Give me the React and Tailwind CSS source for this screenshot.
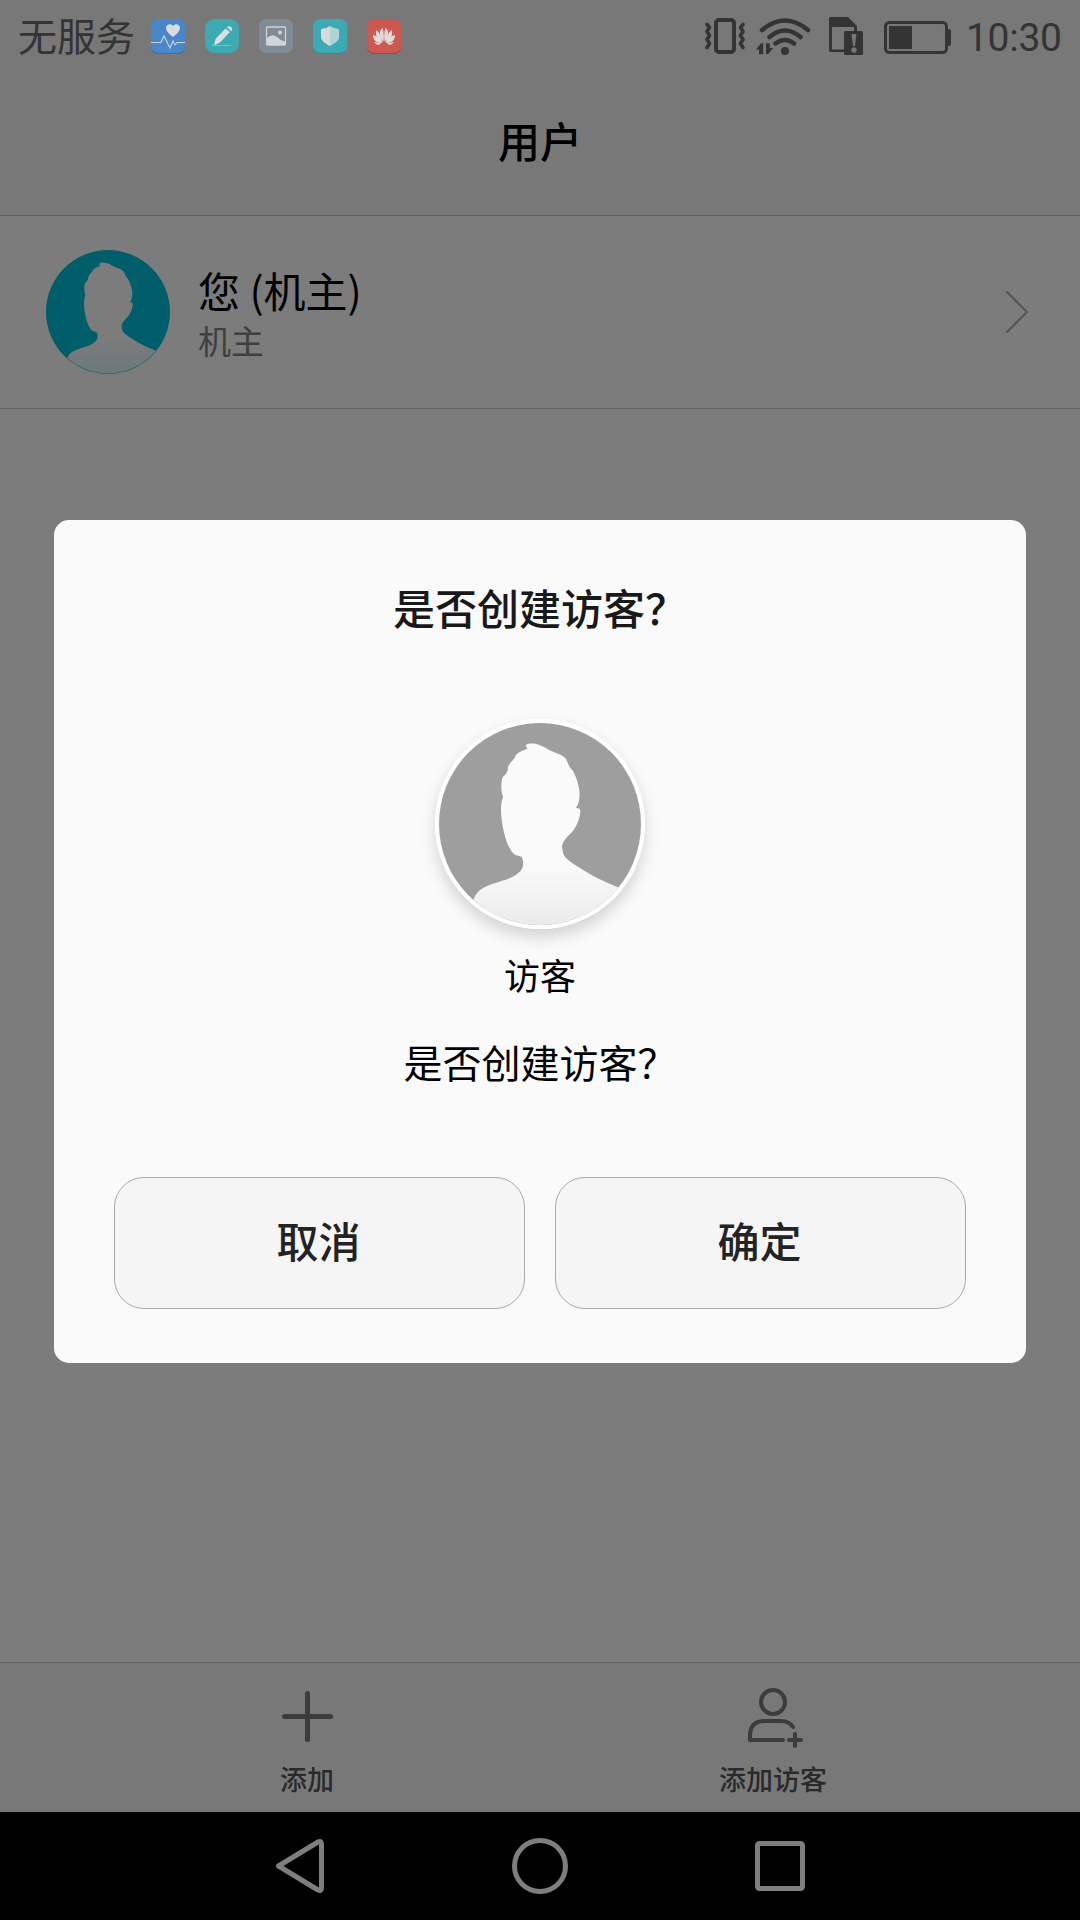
const AVATAR_PATH =
  'M58 197 C60 186 62 179 68 174 C80 166 92 166 102 160 C109 156 112 152 111 145 C110 138 106 141 102 138 C95 132 90 113 89 96 C89 91 89 86 91 81 C89 75 89 70 90 63 C91 59 96 59 96 51 C98 46 101 45 103 41 C104 37 110 35 115 33 C116 32 113 31 114 29 C119 26 127 28 134 32 C140 37 150 37 154 43 C156 47 157 51 161 55 C166 64 169 77 167 84 C167 87 165 90 164 92 C168 92 169 94 168 98 C167 105 163 114 158 118 C154 122 151 125 150 130 C151 137 151 139 155 143 C170 155 190 165 208 172 L208 215 L58 215 Z';

function Avatar({ id, size, fill, body, fade, ring }) {
  return (
    <svg width={size} height={size} viewBox="27 7 202 202">
      <defs>
        <clipPath id={`${id}-clip`}>
          <circle cx="128" cy="108" r={ring ? 101 : 100} />
        </clipPath>
        <linearGradient id={`${id}-body`} gradientUnits="userSpaceOnUse" x1="0" y1="148" x2="0" y2="209">
          <stop offset="0" stopColor={body} />
          <stop offset="1" stopColor={fade} />
        </linearGradient>
      </defs>
      <circle cx="128" cy="108" r="101" fill={fill} />
      <path d={AVATAR_PATH} fill={`url(#${id}-body)`} clipPath={`url(#${id}-clip)`} />
    </svg>
  );
}

function NotificationIcons() {
  return (
    <div className="flex gap-5">
      <svg width="34" height="35" viewBox="0 0 34 35">
        <rect y="1" width="34" height="34" rx="7" fill="#3c6da8" />
        <rect width="34" height="34" rx="7" fill="#4a86ca" />
        <path d="M22 18 C18 15 15 12 15 9 C15 5 20 4 22 7 C24 4 29 5 29 9 C29 12 26 15 22 18Z" fill="#d9dce0" />
        <path d="M0 23.5 H10 L13 17 L19 29 L22 22 L24 26 L26 23.5 H34" fill="none" stroke="#c3d3e6" strokeWidth="1.2" />
      </svg>
      <svg width="34" height="35" viewBox="0 0 34 35">
        <rect width="34" height="34" rx="9" fill="#3caab0" />
        <path d="M9 26.500 L10.500 20 L20.500 9.500 L25 13 L15 23.500Z" fill="#dcdfdf" />
        <path d="M22 8.500 C24 5.500 28 8.500 27 11.500 L26 12Z" fill="#dcdfdf" />
        <path d="M7 26.500 H26" stroke="#8ac5c8" strokeWidth="0.8" />
      </svg>
      <svg width="34" height="35" viewBox="0 0 34 35">
        <rect width="34" height="34" rx="7" fill="#7f8b95" />
        <rect x="7.500" y="8" width="19" height="18" rx="1" fill="none" stroke="#ced2d5" strokeWidth="1.300" />
        <path d="M8 19 Q13 14 18 18 Q22 22 26 22.500 V26 H8Z" fill="#d2d5d7" />
        <circle cx="21" cy="13.500" r="2" fill="#d2d5d7" />
      </svg>
      <svg width="34" height="35" viewBox="0 0 34 35">
        <rect y="1" width="34" height="34" rx="7" fill="#338990" />
        <rect width="34" height="34" rx="7" fill="#3caab5" />
        <path d="M17 7 Q13 10 8 10 V18 C8 22 13 25 17 27Z" fill="#d5dbdc" />
        <path d="M17 7 Q21 10 26 10 V18 C26 22 21 25 17 27Z" fill="#b2d3d6" />
      </svg>
      <svg width="34" height="35" viewBox="0 0 34 35">
        <rect y="1" width="34" height="34" rx="7" fill="#9e4743" />
        <rect width="34" height="34" rx="7" fill="#cb5952" />
        <g fill="#e0dcdb">
          <path d="M16.400 23 C12 16 12 11 15.500 9 C17 13 17 18 16.400 23Z" />
          <path d="M17.600 23 C22 16 22 11 18.500 9 C17 13 17 18 17.600 23Z" />
          <path d="M15.500 23.500 C9 20 8 15 9.500 11 C12 13 15 18 15.500 23.500Z" />
          <path d="M18.500 23.500 C25 20 26 15 24.500 11 C22 13 19 18 18.500 23.500Z" />
          <path d="M15 24 C9 24 6 21 6 16 C10 17 13 20 15 24Z" />
          <path d="M19 24 C25 24 28 21 28 16 C24 17 21 20 19 24Z" />
          <path d="M14.500 24.600 C11 27 8 25 7.500 23Z" />
          <path d="M19.500 24.600 C23 27 26 25 26.500 23Z" />
        </g>
      </svg>
    </div>
  );
}

function StatusIcons() {
  return (
    <svg width="250" height="46" viewBox="704 14 250 46" fill="none" stroke="#343434">
      <rect x="716" y="20" width="18" height="32" rx="3" strokeWidth="4" />
      <path d="M707 24.500 l2.500 3 -2.500 4 2.500 4 -2.500 4 2.500 4 -2.500 4 M743 24.500 l-2.500 3 2.500 4 -2.500 4 2.500 4 -2.500 4 2.500 4" strokeWidth="3.600" strokeLinecap="round" strokeLinejoin="round" />
      <path d="M762 30 Q785 11 808 30 M769.500 37 Q785 24 800.500 37 M775.500 43.500 Q785 36.500 794 43.500" strokeWidth="4.500" strokeLinecap="round" />
      <circle cx="785" cy="51" r="4" fill="#343434" stroke="none" />
      <path d="M756 49.500 L761 43.300 H763.200 V54.300 H759 V49.500Z M766 54.300 V43.300 H769.800 V48 H773.300 L768 54.300Z" fill="#343434" stroke="none" />
      <path d="M829 19 q0-2 2-2 h17 l9 9 v6 h-3 v-5 h-22 v22.500 h12 v2.500 h-13 q-2 0-2-2Z" fill="#343434" stroke="none" />
      <rect x="844" y="31" width="19" height="24" rx="1.500" fill="#343434" stroke="none" />
      <path d="M851.500 34 h5 l-1.500 12 h-2Z" fill="#787878" stroke="none" />
      <circle cx="854" cy="50" r="2.700" fill="#787878" stroke="none" />
      <rect x="885.500" y="22.500" width="61" height="30" rx="4" strokeWidth="3" />
      <path d="M889 26 h23 v23 h-23Z M948 29 h1 q2 0 2 2 v13 q0 2-2 2 h-1Z" fill="#343434" stroke="none" />
    </svg>
  );
}

function StatusBar() {
  return (
    <header className="flex h-[72px] items-start justify-between px-[18px]">
      <div className="flex">
        <span className="mr-[16px] w-[117px] pt-[6px] text-[39px] leading-[56px] whitespace-nowrap text-[#343434]">无服务</span>
        <div className="pt-[19px]">
          <NotificationIcons />
        </div>
      </div>
      <div className="flex">
        <div className="pt-[14px]">
          <StatusIcons />
        </div>
        <span className="ml-[12px] w-[96px] pt-[10px] font-[Roboto] text-[39px] leading-[56px] tracking-[-0.3px] whitespace-nowrap text-[#343434]">10:30</span>
      </div>
    </header>
  );
}

function ToolbarItem({ label, children }) {
  return (
    <button type="button" className="flex w-[120px] flex-col items-center whitespace-nowrap">
      {children}
      <span className="mt-[11px] text-[27px] leading-[40px] font-medium text-[#2a2a2a]">{label}</span>
    </button>
  );
}

function DialogButton({ children }) {
  return (
    <button
      type="button"
      className="h-[132px] w-[411px] rounded-[30px] border border-[#aaaaaa] bg-[#f5f5f5] pr-[2px] pb-[7px] text-[42px] font-medium text-[#232323]"
    >
      {children}
    </button>
  );
}

function GuestDialog() {
  return (
    <section className="absolute top-[520px] left-[54px] flex h-[843px] w-[972px] flex-col items-center rounded-[15px] bg-[#fafafa]">
      <h2 className="mt-[57px] text-[42px] leading-[60px] font-medium text-[#191919]">是否创建访客？</h2>
      <div className="mt-[82px] h-[210px] w-[210px] rounded-full border-4 border-white shadow-[0_8px_16px_rgba(0,0,0,0.16)]">
        <Avatar id="guest" size={202} fill="#9e9e9e" body="#fafafa" fade="#ebebeb" ring />
      </div>
      <p className="mt-[19px] text-[36px] leading-[52px] text-black">访客</p>
      <p className="mt-[33px] text-[39px] leading-[56px] text-black">是否创建访客？</p>
      <div className="mt-[88px] flex gap-[30px]">
        <DialogButton>取消</DialogButton>
        <DialogButton>确定</DialogButton>
      </div>
    </section>
  );
}

function App() {
  return (
    <div className="relative flex h-[1920px] w-[1080px] flex-col overflow-hidden bg-[#7c7c7c] font-['Noto_Sans_CJK_SC',sans-serif]">
      <div className="h-[216px] border-b border-[#5f5f5f] bg-[#787878]">
        <StatusBar />
        <h1 className="mt-[38px] text-center text-[42px] leading-[60px] font-medium text-black">用户</h1>
      </div>

      <div className="flex h-[193px] items-center border-b border-[#646464] pr-[51px] pl-[46px]">
        <Avatar id="owner" size={124} fill="#005e6b" body="#7c7c7c" fade="#6c7879" />
        <div className="ml-[28px] flex-1 pt-[2px]">
          <div className="text-[42px] leading-[54px] text-black">您 (机主)</div>
          <div className="text-[33px] leading-[46px] text-[#3f3f3f]">机主</div>
        </div>
        <svg width="24" height="44" viewBox="0 0 24 44" fill="none" stroke="#545454" strokeWidth="2">
          <path d="M1.500 1.500 L22 22 L1.500 42.500" />
        </svg>
      </div>

      <div className="flex-1" />

      <div className="flex h-[150px] justify-center gap-[346px] border-t border-[#5f5f5f] bg-[#787878] pt-[21px]">
        <ToolbarItem label="添加">
          <svg width="64" height="64" viewBox="0 0 64 64" fill="none" stroke="#3c3c3c" strokeWidth="5" strokeLinecap="round">
            <path d="M32.500 9.500 V55.500 M9.500 32.500 H55.500" />
          </svg>
        </ToolbarItem>
        <ToolbarItem label="添加访客">
          <svg width="64" height="64" viewBox="741 1684 64 64" fill="none" stroke="#3c3c3c" strokeWidth="4" strokeLinecap="round" strokeLinejoin="round">
            <circle cx="773" cy="1702" r="12" />
            <path d="M783 1740 H750 V1736 Q750 1721 765 1721 H781 Q789 1721 793 1727 M789 1740 H801 M795 1734 V1746" />
          </svg>
        </ToolbarItem>
      </div>

      <nav className="flex h-[108px] items-center justify-center gap-[180px] bg-black">
        <svg width="60" height="60" viewBox="270 1836 60 60" fill="none" stroke="#7e7e7e" strokeWidth="5" strokeLinejoin="round">
          <path d="M278.500 1866 L318 1842 Q321.500 1840.500 321.500 1844 V1888 Q321.500 1891.500 318 1890 Z" />
        </svg>
        <svg width="60" height="60" viewBox="0 0 60 60" fill="none" stroke="#7e7e7e" strokeWidth="5">
          <circle cx="30" cy="30" r="25.500" />
        </svg>
        <svg width="60" height="60" viewBox="0 0 60 60" fill="none" stroke="#7e7e7e" strokeWidth="5">
          <rect x="7.500" y="7.500" width="45" height="45" rx="2" />
        </svg>
      </nav>

      <GuestDialog />
    </div>
  );
}

export default App;
